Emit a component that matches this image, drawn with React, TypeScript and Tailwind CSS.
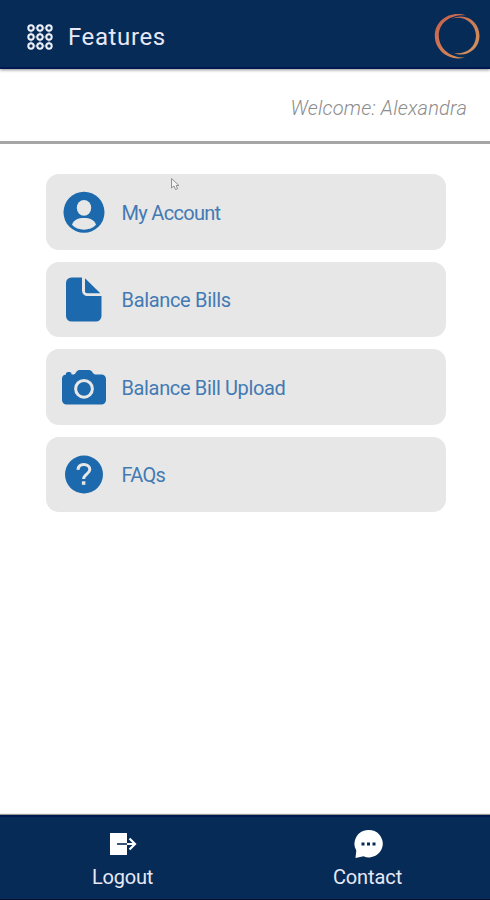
import type { ReactNode } from "react";

const features: { label: string; spacing: string; icon: ReactNode }[] = [
  {
    label: "My Account",
    spacing: "tracking-[-0.7px]",
    icon: (
      <svg className="w-[46px] h-[46px]" viewBox="0 0 46 46">
        <circle cx="23" cy="23.3" r="20.5" fill="#1c6aad" />
        <ellipse cx="23" cy="18.8" rx="7.2" ry="7.9" fill="#e7e7e7" />
        <path d="M11 35.800c1.600-4.900 6.300-6.700 12-6.700s10.400 1.800 12 6.700c-3 3.300-7.300 4.900-12 4.900s-9-1.600-12-4.900z" fill="#e7e7e7" />
      </svg>
    ),
  },
  {
    label: "Balance Bills",
    spacing: "tracking-[-0.33px]",
    icon: (
      <svg className="w-[46px] h-[46px]" viewBox="0 0 46 46">
        <path d="M10.500 1.500H21V14.500a5.500 5.500 0 0 0 5.500 5.500H40.500V40a5.500 5.500 0 0 1-5.500 5.500H10.500a5.500 5.500 0 0 1-5.500-5.500V7a5.500 5.500 0 0 1 5.500-5.500z" fill="#1c6aad" />
        <path d="M24 2.300L39.300 17.300H26a2 2 0 0 1-2-2z" fill="#1c6aad" />
      </svg>
    ),
  },
  {
    label: "Balance Bill Upload",
    spacing: "tracking-[-0.36px]",
    icon: (
      <svg className="w-[46px] h-[46px]" viewBox="0 0 46 46">
        <path d="M5 10.500V9.500C5 7.500 10.500 7.500 10.500 9.500V10.500H12.500C15.200 10.200 15 6 18.500 6H28C31.500 6 31.500 10.200 34.500 10.500H40.500A4.500 4.500 0 0 1 45 15V36A4.500 4.500 0 0 1 40.500 40.500H5.500A4.500 4.500 0 0 1 1 36V15A4.500 4.500 0 0 1 5 10.500z" fill="#1c6aad" />
        <circle cx="23" cy="24.800" r="8.400" fill="none" stroke="#e7e7e7" strokeWidth="3" />
      </svg>
    ),
  },
  {
    label: "FAQs",
    spacing: "tracking-[-0.7px]",
    icon: (
      <svg className="w-[46px] h-[46px]" viewBox="0 0 46 46">
        <circle cx="23" cy="23.500" r="19" fill="#1c6aad" />
        <path d="M17 18.800c.2-3.600 2.700-5.300 5.800-5.300 3.500 0 6 2 6 5.100 0 4.400-6.200 4.700-6.200 9.300" fill="none" stroke="#e7e7e7" strokeWidth="3" />
        <rect x="20.900" y="30.300" width="3.500" height="3.500" fill="#e7e7e7" />
      </svg>
    ),
  },
];

const dots = [4, 13, 22];

export default function App() {
  return (
    <div className="relative flex flex-col w-full h-[900px] overflow-hidden bg-white font-['Roboto',sans-serif]">
      {/* Header */}
      <header className="relative z-10 flex items-center h-[69px] shrink-0 bg-[#072b57] border-b-2 border-[#00174f] pl-[27px] pr-[10px] shadow-[0_1px_3px_rgba(0,0,0,0.45)]">
        <svg className="w-[26px] h-[26px] mt-1.5" viewBox="0 0 26 26" fill="none" stroke="#eef0f8">
          <path d="M4 4H22M4 13H22M4 22H22M4 4V22M13 4V22M22 4V22" strokeWidth="1" opacity="0.6" />
          {dots.map((y) =>
            dots.map((x) => <circle key={`${x}-${y}`} cx={x} cy={y} r="2.700" strokeWidth="2" fill="#072b57" />)
          )}
        </svg>
        <h1 className="ml-[15px] mt-1.5 text-[24px] leading-8 text-[#e6e8f5] tracking-[0.6px]">Features</h1>
        <svg className="ml-auto mt-1 w-[46px] h-[48px]" viewBox="0 0 46 48" fill="none">
          <defs>
            <linearGradient id="ring" x1="0" y1="0" x2="46" y2="48" gradientUnits="userSpaceOnUse">
              <stop offset="0" stopColor="#c75b4b" />
              <stop offset="1" stopColor="#d49a5f" />
            </linearGradient>
          </defs>
          <path d="M32 3.500C17-2 1 8 .8 23.500.6 38 15 50 31 45.500 18 46 5.200 38 4.800 24 4.500 10 18 2 32 3.500z" fill="url(#ring)" />
          <path d="M17 7C32-.500 45.500 10 45.500 24 45.500 38 31 46 20 41 31 43 41.500 36 42 24 42 11 29 2.500 17 7z" fill="url(#ring)" />
        </svg>
      </header>

      {/* Welcome bar */}
      <div className="flex items-center justify-end h-[75px] shrink-0 pr-[23px] pt-[5px] border-b-[3px] border-[#a6a6a6]">
        <p className="text-[20px] leading-6 italic font-light text-[#8c8c8c] tracking-[0.2px]">Welcome: Alexandra</p>
      </div>

      {/* Feature list */}
      <main className="flex-1 pt-[30px] px-[45.500px]">
        <ul className="flex flex-col gap-3 w-[400.500px]">
          {features.map((feature) => (
            <li key={feature.label} className="flex items-center h-[75.500px] rounded-[13px] bg-[#e7e7e7] pl-[15px]">
              {feature.icon}
              <span className={`ml-[15px] mt-0.5 text-[20px] leading-6 text-[#437ab3] ${feature.spacing}`}>{feature.label}</span>
            </li>
          ))}
        </ul>
      </main>

      {/* Footer */}
      <footer className="grid grid-cols-2 h-[85px] shrink-0 bg-[#072b57] border-t-2 border-b border-t-[#00174f] border-b-[#001230] shadow-[0_-1px_1px_rgba(0,0,0,0.4)]">
        <div className="flex flex-col items-center pt-[11px]">
          <svg className="w-[28px] h-[30px]" viewBox="0 0 28 30">
            <path d="M1 5H18V27H1z" fill="#fff" />
            <path d="M8 16H18" stroke="#072b57" strokeWidth="1.600" />
            <path d="M18 16H26M20.500 10.500L26 16L20.500 21.500" fill="none" stroke="#fff" strokeWidth="2.200" />
          </svg>
          <span className="mt-[7px] text-[20px] leading-6 text-[#e6e8f5] tracking-[-0.2px]">Logout</span>
        </div>
        <div className="flex flex-col items-center pt-[11px]">
          <svg className="w-[30px] h-[30px]" viewBox="0 0 30 30">
            <path d="M15.500 2a13.700 13.700 0 1 1-5 26.200L2.500 30l.8-7.500A13.700 13.700 0 0 1 15.500 2z" fill="#fff" />
            <path d="M8.500 14.500h3v3h-3zM14 14.500h3v3h-3zM19.500 14.500h3v3h-3z" fill="#072b57" />
          </svg>
          <span className="mt-[7px] text-[20px] leading-6 text-[#e6e8f5] tracking-[-0.1px]">Contact</span>
        </div>
      </footer>

      {/* Mouse pointer */}
      <svg className="absolute left-[170px] top-[177px] w-[10px] h-[15px]" viewBox="0 0 10 15">
        <path d="M1.500 1.500V11L4 9L5.500 12.500L7.500 11.800L6.200 8.500H9z" fill="#f3f3f3" stroke="#888" strokeWidth="0.900" />
      </svg>
    </div>
  );
}
